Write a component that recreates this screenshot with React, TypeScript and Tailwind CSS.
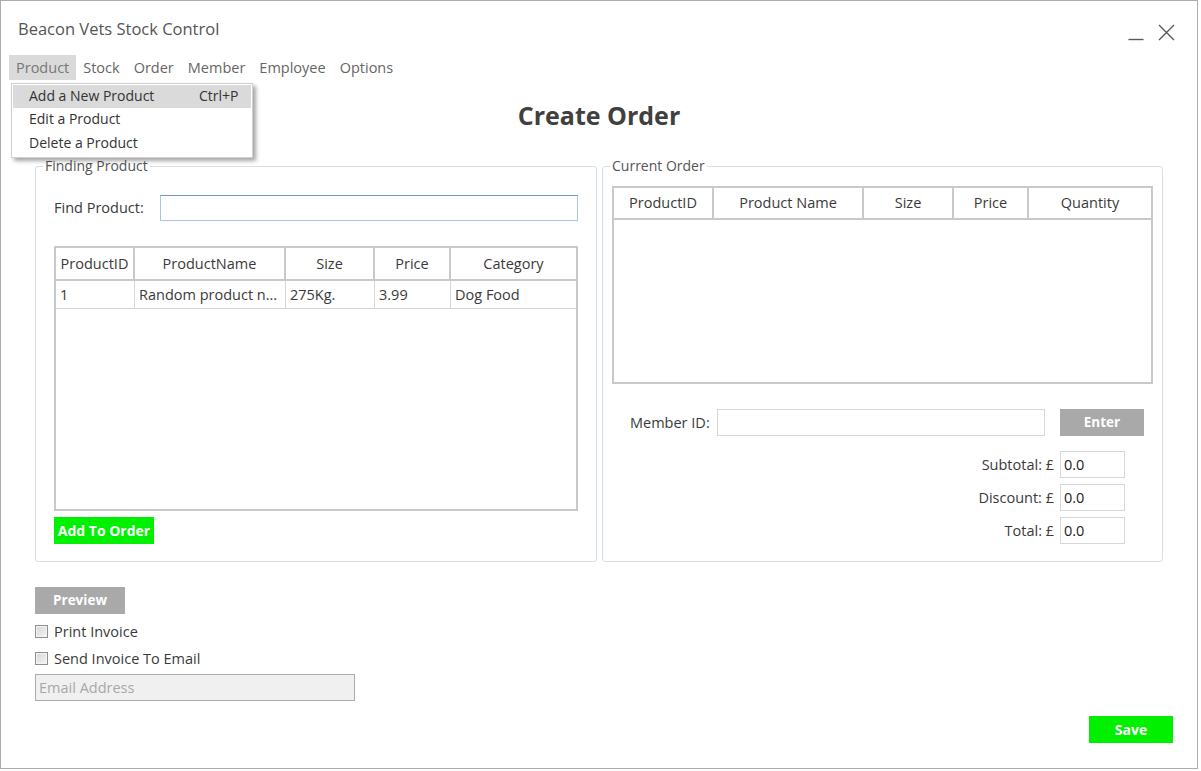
import React from "react";

type Col = { name: string; w: string };

const FIND_COLS: Col[] = [
  { name: "ProductID", w: "w-[79px]" },
  { name: "ProductName", w: "w-[151px]" },
  { name: "Size", w: "w-[89px]" },
  { name: "Price", w: "w-[76px]" },
  { name: "Category", w: "flex-1" },
];

const FIND_ROWS = [["1", "Random product n...", "275Kg.", "3.99", "Dog Food"]];

const ORDER_COLS: Col[] = [
  { name: "ProductID", w: "w-[100px]" },
  { name: "Product Name", w: "w-[150px]" },
  { name: "Size", w: "w-[90px]" },
  { name: "Price", w: "w-[75px]" },
  { name: "Quantity", w: "flex-1" },
];

const MENU = ["Product", "Stock", "Order", "Member", "Employee", "Options"];

function Grid({
  cols,
  rows,
  className,
  headH,
}: {
  cols: Col[];
  rows: string[][];
  className: string;
  headH: string;
}) {
  return (
    <div className={`border-2 border-[#c9c9c9] bg-white ${className}`}>
      <div className={`flex border-b-2 border-[#c9c9c9] ${headH}`}>
        {cols.map((c, i) => (
          <div
            key={c.name}
            className={`${c.w} flex items-center justify-center ${
              i < cols.length - 1 ? "border-r-2 border-[#c9c9c9]" : ""
            }`}
          >
            {c.name}
          </div>
        ))}
      </div>
      {rows.map((r, ri) => (
        <div key={ri} className="flex h-[28px] border-b border-[#d6d6d6]">
          {r.map((cell, i) => (
            <div
              key={i}
              className={`${cols[i].w} flex items-center pl-[4px] whitespace-nowrap overflow-hidden ${
                i < r.length - 1 ? "border-r border-[#d6d6d6]" : ""
              }`}
            >
              {cell}
            </div>
          ))}
        </div>
      ))}
    </div>
  );
}

function Checkbox({ label }: { label: string }) {
  return (
    <label className="flex items-center h-[27px] gap-[6px]">
      <span className="w-[13px] h-[13px] border border-[#8e8f8f] bg-gradient-to-br from-[#d6d6d6] to-[#f5f5f5] shadow-[inset_0_0_0_1px_#f4f4f4]" />
      <span>{label}</span>
    </label>
  );
}

function TotalRow({ label }: { label: string }) {
  return (
    <div className="flex items-center justify-end gap-[6px]">
      <span>{label}</span>
      <div className="w-[65px] h-[27px] border border-[#d3d8dd] bg-white flex items-end pl-[3px] pb-[1px] text-[#222]">
        0.0
      </div>
    </div>
  );
}

export default function App() {
  return (
    <div className="w-[1201px] h-[771px] bg-white font-['Open_Sans',sans-serif] text-[14.5px] text-[#3a3a3a]">
      <div className="relative w-[1198px] h-[769px] border border-[#acacac] flex flex-col">
        {/* title bar */}
        <div className="flex justify-between h-[54px] pl-[17px] pr-[22px]">
          <div className="pt-[16px] text-[16.5px] leading-[24px] text-[#555]">
            Beacon Vets Stock Control
          </div>
          <div className="flex items-start gap-[14px] pt-[23px]">
            <svg width="16" height="17" viewBox="0 0 16 17">
              <path d="M0.5 15.5H15.5" stroke="#5a5a5a" strokeWidth="1.4" />
            </svg>
            <svg width="17" height="17" viewBox="0 0 17 17">
              <path d="M1 1L16 16M16 1L1 16" stroke="#5a5a5a" strokeWidth="1.4" />
            </svg>
          </div>
        </div>

        {/* menu bar */}
        <div className="flex h-[25px] pl-[8px] text-[14.5px] text-[#666]">
          {MENU.map((m, i) => (
            <div
              key={m}
              className={`flex items-center px-[7px] ${i === 0 ? "bg-[#dadada] text-[#777]" : ""}`}
            >
              {m}
            </div>
          ))}
        </div>

        {/* dropdown */}
        <div className="absolute left-[10px] top-[82px] w-[242px] p-[1px] bg-white border border-[#d0d0d0] shadow-[3px_3px_4px_rgba(0,0,0,0.35)] text-[14px] text-[#333] z-10">
          <div className="flex items-center h-[23px] pb-[2px] bg-[#dadada] pl-[16px]">
            <span className="w-[170px]">Add a New Product</span>
            <span>Ctrl+P</span>
          </div>
          <div className="flex items-center h-[24px] pb-[3px] pl-[16px]">Edit a Product</div>
          <div className="flex items-center h-[24px] pb-[3px] pl-[16px]">Delete a Product</div>
        </div>

        {/* heading */}
        <div className="h-[76px] pt-[19px] text-center text-[25px] leading-[32px] font-bold text-[#404040]">
          Create Order
        </div>

        {/* group boxes */}
        <div className="flex gap-[5px] px-[34px]">
          <fieldset className="w-[562px] h-[406px] border border-[#d5dfe5] rounded-[3px] px-0">
            <legend className="ml-[7px] px-[2px] text-[14px] leading-[20px] text-[#555]">
              Finding Product
            </legend>
            <div className="px-[18px] pt-[19px]">
              <div className="flex items-center h-[26px]">
                <span className="w-[106px]">Find Product:</span>
                <div className="flex-1 h-[26px] border border-[#a7c5e6] border-t-[#6b98cb] bg-white" />
              </div>
              <Grid
                cols={FIND_COLS}
                rows={FIND_ROWS}
                className="mt-[25px] h-[265px]"
                headH="h-[33px]"
              />
              <button className="mt-[6px] w-[100px] h-[27px] bg-[#00f000] text-white font-bold text-[14px]">
                Add To Order
              </button>
            </div>
          </fieldset>

          <fieldset className="flex-1 h-[406px] border border-[#d5dfe5] rounded-[3px] px-0">
            <legend className="ml-[7px] px-[2px] text-[14px] leading-[20px] text-[#555]">
              Current Order
            </legend>
            <div className="px-[9px] pt-[10px]">
              <Grid cols={ORDER_COLS} rows={[]} className="h-[198px]" headH="h-[32px]" />
              <div className="flex items-center h-[27px] mt-[25px] pl-[18px] pr-[9px]">
                <span className="w-[87px]">Member ID:</span>
                <div className="w-[328px] h-[27px] border border-[#d3d8dd] bg-white" />
                <button className="ml-auto w-[84px] h-[27px] bg-[#a9a9a9] text-white font-bold text-[13.5px]">
                  Enter
                </button>
              </div>
              <div className="flex flex-col gap-[6px] mt-[15px] pr-[28px]">
                <TotalRow label="Subtotal: £" />
                <TotalRow label="Discount: £" />
                <TotalRow label="Total: £" />
              </div>
            </div>
          </fieldset>
        </div>

        {/* lower section */}
        <div className="flex justify-between pl-[34px] pr-[24px] mt-[25px]">
          <div className="flex flex-col">
            <button className="w-[90px] h-[27px] bg-[#a9a9a9] text-white font-bold text-[13.5px]">
              Preview
            </button>
            <div className="mt-[4px]">
              <Checkbox label="Print Invoice" />
              <Checkbox label="Send Invoice To Email" />
            </div>
            <div className="mt-[2px] w-[320px] h-[27px] border border-[#acacac] bg-[#f0f0f0] flex items-center pl-[3px] text-[#a8a8a8]">
              Email Address
            </div>
          </div>
          <button className="self-start mt-[129px] w-[84px] h-[27px] bg-[#00f000] text-white font-bold text-[14px]">
            Save
          </button>
        </div>
      </div>
    </div>
  );
}
